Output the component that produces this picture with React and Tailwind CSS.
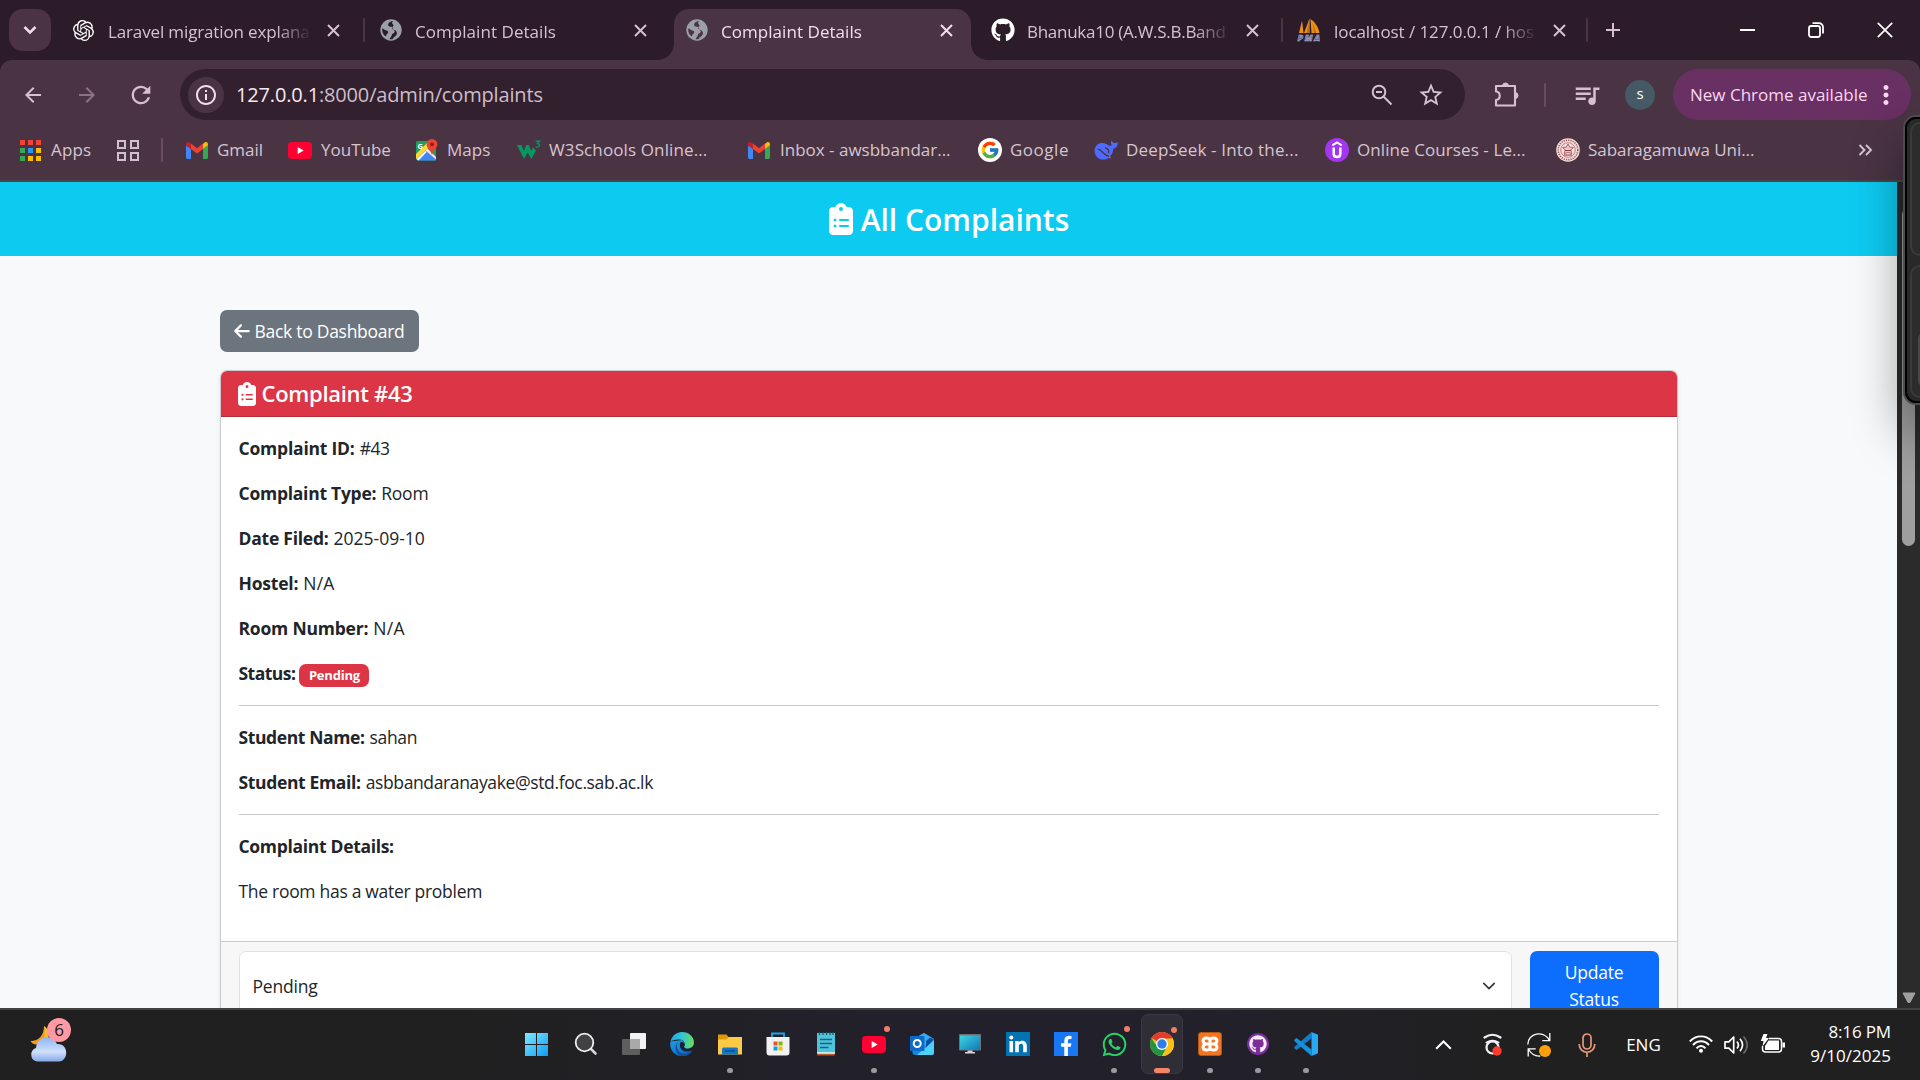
import React from 'react';
import { FaClipboardList, FaArrowLeft, FaGithub, FaWhatsapp } from 'react-icons/fa6';
import { SiOpenai, SiXampp } from 'react-icons/si';
import { FcGoogle } from 'react-icons/fc';
import {
  MdArrowBack,
  MdArrowForward,
  MdRefresh,
  MdStarBorder,
  MdQueueMusic,
  MdMoreVert,
  MdInfoOutline,
  MdAdd,
} from 'react-icons/md';

/* ---------- Favicons ---------- */

function Globe() {
  return (
    <svg viewBox="0 0 22 22" className="size-[22px]">
      <circle cx="11" cy="11" r="10.7" fill="#9aa0a6" />
      <path
        d="M11.5 2.2c-2.6 1-3.4 2.1-3.4 3.8 0 1.2 1.1 1.6 2.8 1.7 1.6.2 1.8 1 1.8 2 0 1.2 1.5 1.1 1.9 2.2.4 1.2-.5 2.2-1.7 2.7-1.3.6-.7 2.1-1.9 3.3-.8.8-1.3 1.4-1.3 2.3 1 .1 2.1.1 3-.2 1-2.3 3.4-2.6 4.1-5 .3-1 .1-2.3-.8-3.1-1.4-1.3-3.6-.7-4-2.3-.3-1.4 1.3-1.7 1.5-3 .1-1.2-1.4-1.5-1.4-2.6 0-.9.6-1.3 1.2-1.6zM2.3 9.6c1.7.2 2.3 1.6 4 1.8 1.5.2 2.1 1 1.900 2.200-.2 1.300-1.700 1.300-1.900 2.600-.1.800-.5 1.100-1 1.100C3 15.500 1.800 12.500 2.300 9.600z"
        fill="currentColor"
      />
    </svg>
  );
}

function PhpMyAdmin() {
  return (
    <svg viewBox="0 0 24 24" className="size-6">
      <path d="M5 2.500 2 15h4.500zM12.500.5 7 15h5.500zM13.500 1l1 14h8C21.500 9 18 4 13.500 1z" fill="#f29111" />
      <path d="M12.500.5 9.500 15h3zM15.500 4l1.500 11h2.500z" fill="#b9741a" />
      <text x="0.500" y="22.800" fontSize="9" fontWeight="800" fontStyle="italic" fontFamily="Open Sans, sans-serif" fill="#5a6694" stroke="#d5d8ea" strokeWidth=".35" textLength="22.500">
        PMA
      </text>
    </svg>
  );
}

function Gmail() {
  return (
    <svg viewBox="0 0 22 17" className="h-[17px] w-[22px]">
      <path d="M0 3v12.500C0 16.300.7 17 1.500 17H5V7z" fill="#4285f4" />
      <path d="M17 17h3.500c.8 0 1.500-.7 1.500-1.500V3l-5 4z" fill="#34a853" />
      <path d="M17 2v5l5-3.700V2.200C22 .4 20-.600 18.500.600z" fill="#fbbc04" />
      <path d="M5 7.100V1.600l6 4.600 6-4.600v5.500l-6 4.500z" fill="#ea4335" />
      <path d="M0 2.200v1.200L5 7.100V1.900L3.500.600C2-.600 0 .4 0 2.200z" fill="#c5221f" />
    </svg>
  );
}

function YouTube({ className }) {
  return (
    <svg viewBox="0 0 24 17" className={className}>
      <rect width="24" height="17" rx="3.800" fill="#ff0033" />
      <path d="M9.700 5v7l6-3.500z" fill="#fff" />
    </svg>
  );
}

function Maps() {
  return (
    <svg viewBox="0 0 22 22" className="size-[22px]">
      <rect x="0" y="2" width="20" height="19.500" rx="2" fill="#1fa05a" />
      <path d="M0 19.500 9.500 11l10.500 9v1.500H2z" fill="#4285f4" />
      <path d="m0 15 11-11 4 2L1 20.500 0 19z" fill="#fdd835" />
      <path d="M0 4a2 2 0 0 1 2-2h10.500L0 14.500z" fill="#1fa05a" />
      <path d="m9.500 11.500 2-2L20 18v2.500z" fill="#e8eaed" />
      <path d="M1 20.500 9.500 12l1.200 1.100-8.200 8.400z" fill="#fff" />
      <text x="1.500" y="9.500" fontSize="7.500" fontWeight="700" fontFamily="Open Sans, sans-serif" fill="#fff">G</text>
      <path d="M16 0a5.400 5.400 0 0 0-5.400 5.400c0 3.600 4.200 5.200 5.400 10.600 1.200-5.400 5.400-7 5.400-10.600A5.400 5.400 0 0 0 16 0z" fill="#e94335" />
      <circle cx="16" cy="5.300" r="1.900" fill="#8c1d18" />
    </svg>
  );
}

function W3() {
  return (
    <svg viewBox="0 0 24 20" className="h-5 w-6">
      <path d="M0 5h4.500l2.300 6 2.500-6h2.400l2.500 6L16 7.500l3 3L14.500 19 10.500 12.500 7 19z" fill="#059862" />
      <path d="M18.700 1.200h3.800l-2 2.300c3 .2 2.800 4.300-1.800 3.600" fill="none" stroke="#059862" strokeWidth="1.300" />
    </svg>
  );
}

function DeepSeek() {
  return (
    <svg viewBox="0 0 24 22" className="h-[22px] w-6">
      <path
        d="M23.700 3c-1.500 1-2.200 1-3.200.9-1.500-.2-2.300-1-3-2.400-.8 1.400-.8 3.300.3 5-2 .6-3.500-.2-5-1.300C11 4.200 9 3.800 7.500 3.900 3.500 4.200.6 7.500.6 12c0 4.900 3.900 8.600 8.600 8.600 2 0 3.700-.6 5.100-1.700 1 .5 2.100.6 3.200.2-.3-.7-.9-1-1.400-1.700 2.200-2.400 3-4.900 3.100-7.600 2.800-.7 4.800-2.800 4.500-6.800z"
        fill="#4d6bfe"
      />
      <path d="M3.500 10.200c4.500-.2 5.500 6 11.500 7.200M11.200 9c2.600.6 3.900 2.800 3.400 5.200" fill="none" stroke="#4a3444" strokeWidth="1.300" />
    </svg>
  );
}

function Udemy() {
  return (
    <svg viewBox="0 0 24 24" className="size-6">
      <circle cx="12" cy="12" r="12" fill="#a435f0" />
      <path d="m7.300 7.300 4.700-2.900 4.700 2.900" fill="none" stroke="#fff" strokeWidth="2.100" />
      <path d="M8.700 9.500v6.200c0 4.400 6.600 4.400 6.600 0V9.500" fill="none" stroke="#fff" strokeWidth="2.500" />
    </svg>
  );
}

function Crest() {
  return (
    <svg viewBox="0 0 24 24" className="size-6">
      <circle cx="12" cy="12" r="11.800" fill="#f3dedd" />
      <circle cx="12" cy="12" r="9.800" fill="none" stroke="#a55a5c" strokeWidth="1.500" strokeDasharray="1.300 1" />
      <circle cx="12" cy="12" r="7.300" fill="none" stroke="#b97475" strokeWidth=".9" />
      <path d="m12 6 1.700 3.200 3.600.3-2.500 2.500 1 3.700-3.800-1.500-3.800 1.500 1-3.700-2.500-2.500 3.600-.3z" fill="#e9cac8" stroke="#a04c50" strokeWidth=".8" />
      <path d="M9 12.500h6M8 17h8" stroke="#8d3a40" strokeWidth="1" />
    </svg>
  );
}

function AppsGrid() {
  const colors = ['bg-[#f44336]', 'bg-[#f44336]', 'bg-[#f44336]', 'bg-[#34a853]', 'bg-[#2196f3]', 'bg-[#fbbc04]', 'bg-[#34a853]', 'bg-[#fbbc04]', 'bg-[#fbbc04]'];
  return (
    <div className="grid grid-cols-3 gap-x-[3px] gap-y-[3px]">
      {colors.map((c, i) => (
        <span key={i} className={`h-[5px] w-[5px] ${c}`} />
      ))}
    </div>
  );
}

/* ---------- Browser chrome ---------- */

const tabs = [
  { title: 'Laravel migration explana', icon: <SiOpenai className="size-[21px] text-white" />, inset: 'ml-[11px] mr-[-1px]', track: 'tracking-[-0.008em]' },
  { title: 'Complaint Details', icon: <span className="text-[#2c1b29]"><Globe /></span>, inset: 'ml-3 mr-[-1px]', track: 'tracking-[0.003em]' },
  { title: 'Complaint Details', icon: <span className="text-[#4a3444]"><Globe /></span>, inset: 'ml-3 mr-[-1px]', track: 'tracking-[0.003em]', active: true },
  { title: 'Bhanuka10 (A.W.S.B.Band', icon: <FaGithub className="size-6 text-white" />, inset: 'ml-[11px] mr-0', track: 'tracking-[-0.016em]' },
  { title: 'localhost / 127.0.0.1 / hos', icon: <PhpMyAdmin />, inset: 'ml-[11px] mr-px', track: 'tracking-[-0.004em]' },
];

function Tab({ title, icon, active, inset, track, divider }) {
  return (
    <div className="relative h-[60px] w-[306px] shrink-0 pt-[9px]">
      {divider && <span className="absolute top-[18px] -left-[5px] h-6 w-[2px] rounded bg-[#4a3444]" />}
      {active && (
        <>
          <span className="absolute bottom-0 -left-4 size-4 bg-[radial-gradient(circle_at_0_0,transparent_15.500px,#4a3444_16px)]" />
          <span className="absolute right-[-7px] bottom-0 size-4 bg-[radial-gradient(circle_at_100%_0,transparent_15.500px,#4a3444_16px)]" />
        </>
      )}
      <div
        className={`flex h-[51px] w-[297px] items-center pb-[9px] ${
          active ? 'rounded-t-[15px] bg-[#4a3444] text-[#f1dfea]' : 'text-[#d9bfd2]'
        }`}
      >
        <span className={`flex w-9 shrink-0 items-center ${inset}`}>{icon}</span>
        <span className={`w-[204px] shrink-0 pt-[3px] whitespace-nowrap [mask-image:linear-gradient(90deg,#000_168px,transparent_204px)] ${track}`}>
          {title}
        </span>
        <svg viewBox="0 0 13 13" className="ml-[15px] size-[13px] shrink-0">
          <path d="m1 1 11 11M12 1 1 12" stroke="currentColor" strokeWidth="2" />
        </svg>
      </div>
    </div>
  );
}

function TabStrip() {
  return (
    <div className="flex h-[60px] bg-[#2c1b29] text-[17px]">
      <div className="mt-[9px] mr-[11px] ml-[9px] flex size-[42px] shrink-0 items-center justify-center rounded-[14px] bg-[#4a3444]">
        <svg viewBox="0 0 14 10" className="h-[10px] w-[14px]">
          <path d="m1.500 2 5.500 5.500L12.500 2" fill="none" stroke="#f1dfea" strokeWidth="2.500" />
        </svg>
      </div>
      {tabs.map((t, i) => (
        <Tab key={i} {...t} divider={i === 1 || i === 4} />
      ))}
      <div className="flex h-[60px] items-center">
        <span className="-ml-[6px] h-6 w-[2px] rounded bg-[#4a3444]" />
        <MdAdd className="ml-[13px] size-[24px] text-[#d9bfd2]" />
      </div>
      <div className="mr-[27px] ml-auto flex h-[60px] items-center gap-[53px] text-white">
        <span className="h-[2px] w-[15px] bg-white" />
        <svg viewBox="0 0 16 16" className="size-4" fill="none" stroke="#fff" strokeWidth="1.800">
          <rect x="1" y="4" width="11" height="11" rx="2.200" />
          <path d="M4.500 1.200H11A4 4 0 0 1 15 5.200v6.300" />
        </svg>
        <svg viewBox="0 0 16 16" className="size-4">
          <path d="m.8.8 14.400 14.400M15.200.8.8 15.200" stroke="#fff" strokeWidth="1.700" />
        </svg>
      </div>
    </div>
  );
}

function Toolbar() {
  return (
    <div className="bg-[#2c1b29]">
      <div className="flex h-[69px] items-center rounded-t-[12px] bg-[#4a3444] text-[#d9bfd2]">
        <MdArrowBack className="ml-[21px] size-6 shrink-0" />
        <MdArrowForward className="ml-[30px] size-6 shrink-0 text-[#8c7285]" />
        <MdRefresh className="ml-[28px] size-[28px] shrink-0" />
        <div className="ml-[25px] flex h-[51px] w-[1285px] shrink-0 items-center rounded-full bg-[#32202e] pl-[8px]">
          <span className="flex size-9 items-center justify-center rounded-full bg-[#4a3444]">
            <MdInfoOutline className="size-6 text-[#f1dfea]" />
          </span>
          <span className="ml-3 text-[20px] tracking-[-0.008em] text-[#cdbdc8]">
            <span className="text-[#f6e8f1]">127.0.0.1</span>:8000/admin/complaints
          </span>
          <svg viewBox="0 0 22 22" className="mt-[1px] ml-auto size-[22px]" fill="none" stroke="#d0c3cc" strokeWidth="2">
            <circle cx="8" cy="8" r="6.300" />
            <path d="m12.500 12.500 8 8M5 8h6" />
          </svg>
          <MdStarBorder className="mr-[20px] ml-[24px] size-[28px] text-[#d0c3cc]" />
        </div>
        <svg viewBox="0 0 26 26" className="ml-[29px] size-[26px] shrink-0" fill="none" stroke="currentColor" strokeWidth="2.100" strokeLinejoin="round">
          <path d="M2 4h19v19.500H2v-5.500c5-.5 5-8 0-8.500z" />
          <path d="M8.500 4a3 3 0 0 1 6 0zM21 10.500a3 3 0 0 1 0 6z" fill="currentColor" strokeWidth="1" />
        </svg>
        <span className="ml-[24px] h-6 w-[2px] shrink-0 rounded bg-[#6a4b62]" />
        <MdQueueMusic className="ml-[26px] size-[30px] shrink-0" />
        <span className="ml-[23px] flex size-[30px] shrink-0 items-center justify-center rounded-full bg-[#455a64] pb-[2px] text-[15px] leading-none text-white">
          s
        </span>
        <div className="ml-[18px] flex h-[51px] w-[238px] shrink-0 items-center rounded-full bg-[#693063] pl-[17px] text-[17px] text-[#fbd7f2]">
          <span className="whitespace-nowrap">New Chrome available</span>
          <MdMoreVert className="ml-[3px] size-[30px] shrink-0" />
        </div>
      </div>
    </div>
  );
}

function Bookmark({ className, icon, iconClass = 'w-8', label }) {
  return (
    <div className={`flex shrink-0 items-center whitespace-nowrap ${className}`}>
      <span className={`flex shrink-0 items-center ${iconClass}`}>{icon}</span>
      <span>{label}</span>
    </div>
  );
}

function BookmarksBar() {
  return (
    <div className="-mt-[9px] flex h-[62px] items-center border-b-2 border-[#4b454b] bg-[#4a3444] pl-[20px] text-[17px] text-[#d5c5d0]">
      <Bookmark className="w-[97px] tracking-[0.010em]" icon={<AppsGrid />} iconClass="w-[31px]" label="Apps" />
      <div className="grid w-[22px] shrink-0 grid-cols-2 gap-[3px]">
        {[0, 1, 2, 3].map((i) => (
          <span key={i} className="size-[9px] border-2 border-[#d0c0cb]" />
        ))}
      </div>
      <span className="mr-[23px] ml-[22px] h-6 w-[2px] shrink-0 rounded bg-[#6a4b62]" />
      <Bookmark className="w-[102px]" icon={<Gmail />} iconClass="w-[31px]" label="Gmail" />
      <Bookmark className="w-[128px]" icon={<YouTube className="h-[17px] w-6" />} iconClass="w-[33px]" label="YouTube" />
      <Bookmark className="w-[101px]" icon={<Maps />} iconClass="w-[31px]" label="Maps" />
      <Bookmark className="w-[231px] tracking-[0.007em]" icon={<W3 />} label="W3Schools Online..." />
      <Bookmark className="w-[230px]" icon={<Gmail />} label="Inbox - awsbbandar..." />
      <Bookmark
        className="w-[116px] tracking-[0.030em]"
        icon={<span className="flex size-6 items-center justify-center rounded-full bg-white"><FcGoogle className="size-5" /></span>}
        label="Google"
      />
      <Bookmark className="w-[231px] tracking-[0.010em]" icon={<DeepSeek />} label="DeepSeek - Into the..." />
      <Bookmark className="w-[231px] tracking-[0.005em]" icon={<Udemy />} label="Online Courses - Le..." />
      <Bookmark className="w-[200px] tracking-[-0.003em]" icon={<Crest />} label="Sabaragamuwa Uni..." />
      <svg viewBox="0 0 15 12" className="mr-[47px] ml-auto h-3 w-[15px]" fill="none" stroke="#d5c5d0" strokeWidth="1.900">
        <path d="m1.500 1 5 5-5 5M8 1l5 5-5 5" />
      </svg>
    </div>
  );
}

/* ---------- Page ---------- */

function Field({ label, children, track = 'tracking-[-0.012em]' }) {
  return (
    <p className="mb-[18px] h-[27px]">
      <strong className={`font-bold ${track}`}>{label}</strong>
      <span className="ml-[5px]">{children}</span>
    </p>
  );
}

function Page() {
  return (
    <div className="h-full min-w-0 flex-1 overflow-hidden bg-[#f8f9fa] text-[17.500px] leading-[27px] tracking-[-0.012em] text-[#212529]">
      <header className="flex h-[74px] items-center justify-center gap-2 bg-[#0dcaf0] pt-px pl-px text-white">
        <FaClipboardList className="-mt-[2px] h-[32px] w-6" />
        <h2 className="text-[30px] font-semibold tracking-normal">All Complaints</h2>
      </header>
      <main className="mx-auto w-[1458px] pt-[54px]">
        <button className="flex h-[42px] w-[199px] items-center rounded-[7px] bg-[#6c757d] pl-[13px] text-white">
          <FaArrowLeft className="mr-[4px] size-[18px]" />
          <span className="tracking-[-0.016em] whitespace-nowrap">Back to Dashboard</span>
        </button>
        <section className="mt-[18px] overflow-hidden rounded-[7px] border border-[#c9cbcd] bg-white shadow-[0_2px_5px_rgba(0,0,0,0.08)]">
          <div className="flex h-[46px] items-center border-b border-[#b52d3b] bg-[#dc3545] pl-[17px] text-white">
            <FaClipboardList className="mr-[6px] h-6 w-[18px]" />
            <h5 className="text-[22px] font-semibold tracking-[-0.013em]">Complaint #43</h5>
          </div>
          <div className="p-[18px]">
            <Field label="Complaint ID:"><span className="tracking-[-0.030em]">#43</span></Field>
            <Field label="Complaint Type:" track="tracking-[-0.015em]">Room</Field>
            <Field label="Date Filed:" track="tracking-[-0.014em]"><span className="tracking-normal">2025-09-10</span></Field>
            <Field label="Hostel:"><span className="tracking-[0.015em]">N/A</span></Field>
            <Field label="Room Number:"><span className="tracking-[0.020em]">N/A</span></Field>
            <p className="flex h-[27px] items-center">
              <strong className="font-bold tracking-[-0.030em]">Status:</strong>
              <span className="mt-[3px] ml-[4px] flex h-[23px] w-[70px] items-center justify-center rounded-[7px] bg-[#dc3545] text-[13px] font-bold text-white">
                Pending
              </span>
            </p>
            <hr className="my-[18px] border-[#c8c9ca]" />
            <Field label="Student Name:" track="tracking-[-0.022em]"><span className="tracking-[-0.020em]">sahan</span></Field>
            <p className="h-[27px]">
              <strong className="font-bold tracking-[-0.020em]">Student Email:</strong>
              <span className="ml-[5px] tracking-[-0.021em]">asbbandaranayake@std.foc.sab.ac.lk</span>
            </p>
            <hr className="my-[18px] border-[#c8c9ca]" />
            <Field label="Complaint Details:" track="tracking-[-0.018em]" />
            <p className="mb-[18px] h-[27px] tracking-[-0.017em]">The room has a water problem</p>
          </div>
          <div className="flex gap-[18px] border-t border-[#c9cbcd] bg-[#f7f7f7] px-[18px] py-[9px]">
            <div className="flex h-[70px] flex-1 items-center justify-between rounded-[7px] border border-[#dee2e6] bg-white pr-[15px] pl-[13px]">
              <span>Pending</span>
              <svg viewBox="0 0 16 16" className="size-[14px]">
                <path d="m2 5 6 6 6-6" fill="none" stroke="#343a40" strokeWidth="2" strokeLinecap="round" strokeLinejoin="round" />
              </svg>
            </div>
            <button className="h-[70px] w-[129px] rounded-[7px] bg-[#0d6efd] px-6 text-center text-white">
              Update Status
            </button>
          </div>
        </section>
      </main>
    </div>
  );
}

function Scrollbar() {
  return (
    <div className="flex h-full w-[23px] shrink-0 flex-col items-center bg-[#2b2b2b]">
      <svg viewBox="0 0 14 10" className="mt-[10px] h-[10px] w-[14px]"><path d="m7 1 6 8H1z" fill="#9f9f9f" /></svg>
      <div className="mt-[6px] h-[338px] w-[13px] rounded-full bg-[#9f9f9f]" />
      <svg viewBox="0 0 14 12" className="mt-auto mb-[4px] h-[12px] w-[14px]">
        <path d="M1 1h12L8 10.500H6z" fill="#9f9f9f" stroke="#9f9f9f" strokeWidth="1" strokeLinejoin="round" />
      </svg>
    </div>
  );
}

/* Floating panel docked past the right edge of the screen. */
function SidePanel() {
  return (
    <div className="absolute top-[115px] left-[1903px] h-[290px] w-[60px] rounded-[13px] border-2 border-[#4c4c4c] bg-[#292929] shadow-[0_28px_50px_rgba(0,0,0,0.400)]">
      <div className="flex h-full flex-col gap-[9px] rounded-[11px] border-2 border-black py-[3px] pl-[3px]">
        <div className="h-[134px] rounded-[10px] border-2 border-[#3a3a3a] bg-[#2c2c2c]" />
        <div className="flex flex-1 rounded-[10px] border-2 border-[#3a3a3a] bg-[#2c2c2c] pt-16 pb-2 pl-[6px]">
          <div className="w-full rounded-[8px] border-2 border-[#4a4845] bg-[#35332f]" />
        </div>
      </div>
    </div>
  );
}

/* ---------- Taskbar icons ---------- */

function WindowsLogo() {
  return (
    <svg viewBox="0 0 23 23" className="mr-[3px] size-[23px]">
      <defs>
        <linearGradient id="win" x1="0" y1="0" x2="1" y2="1">
          <stop offset="0" stopColor="#7fe9ff" />
          <stop offset="1" stopColor="#0f9bf5" />
        </linearGradient>
      </defs>
      <path d="M0 0h11v11H0zM12 0h11v11H12zM0 12h11v11H0zM12 12h11v11H12z" fill="url(#win)" />
    </svg>
  );
}

function SearchGlass() {
  return (
    <svg viewBox="0 0 24 24" className="size-6">
      <path d="m16 16 5.500 5.500" stroke="#d4d4d6" strokeWidth="2.600" strokeLinecap="round" />
      <circle cx="10.500" cy="10.500" r="8.800" fill="#414143" stroke="#eeeeef" strokeWidth="1.800" />
    </svg>
  );
}

function TaskView() {
  return (
    <svg viewBox="0 0 24 24" className="size-6">
      <rect x="8" y="1" width="16" height="16" rx="1" fill="#f2f2f2" />
      <rect x="0" y="7" width="18" height="16" rx="1" fill="#5e5e5e" />
      <path d="M8 7h10v10H8z" fill="#a9a9a9" />
    </svg>
  );
}

function Edge() {
  return (
    <svg viewBox="0 0 24 24" className="size-6">
      <defs>
        <linearGradient id="edgeA" x1="0" y1="0.300" x2="1" y2="0.400">
          <stop offset="0" stopColor="#22a6ea" />
          <stop offset=".5" stopColor="#35c6d0" />
          <stop offset="1" stopColor="#66dd58" />
        </linearGradient>
        <linearGradient id="edgeB" x1="0" y1="0" x2="0.600" y2="1">
          <stop offset="0" stopColor="#1b9de2" />
          <stop offset="1" stopColor="#0c6fd0" />
        </linearGradient>
      </defs>
      <path d="M.5 9.500C-1 17 4 24 12 24c4.500 0 8-2 10-5L12 8z" fill="url(#edgeB)" />
      <path d="M9 9.500c-2.500 2-3 6.500-.2 9.700 2.700 3.100 8.200 3.500 13.200.1-2 2.900-5.500 4.700-9.800 4.700C6 23.500 2.500 14 9 9.500z" fill="#154c9c" />
      <path d="M.5 9.500C2 3.500 6.500 0 12 0c7 0 12 5 12 10.500 0 3.800-3 6-6.200 6-2.800 0-4-1-3.500-2 1.500-2 .7-6.500-4.800-7C5.500 7.200 2 8.500.5 9.500z" fill="url(#edgeA)" />
      <path d="M10.200 10.500c1.800-1.300 4.300 0 4.600 2-.1 1.300-1.300 2-.5 3 1.500 1.600 5 1.700 8.700-.2l-.7 3.400c-5.300 2.400-14.300.5-12.100-8.200z" fill="#1e2028" />
      <path d="M22 18.900c-5 3-10.500 1.500-11.800-4 2 4.500 7.500 5 11.800 3.300z" fill="#154c9c" />
    </svg>
  );
}

function Folder() {
  return (
    <svg viewBox="0 0 24 24" className="size-6">
      <path d="M0 2.500h8.500l2 2.500H24v6H0z" fill="#dd9a06" />
      <path d="M0 7.500h8L11 5h13v17.500H0z" fill="#fdca45" />
      <path d="M4 22.500v-5c0-1.500 1-2 2-2h12c1.500 0 2 .8 2 2v5z" fill="#1276c9" />
      <path d="M7 19h10" stroke="#0b4b89" strokeWidth="1.300" />
    </svg>
  );
}

function Store() {
  return (
    <svg viewBox="0 0 24 24" className="size-6">
      <path d="M6 6V1.500h12V6" fill="none" stroke="#1fa3ec" strokeWidth="1.800" />
      <path d="M.5 5h23v15.500a3 3 0 0 1-3 3h-17a3 3 0 0 1-3-3z" fill="#f1f1f1" />
      <path d="M7.500 9.500h4v4h-4z" fill="#f25022" />
      <path d="M12.500 9.500h4v4h-4z" fill="#7fba00" />
      <path d="M7.500 14.500h4v4h-4z" fill="#00a4ef" />
      <path d="M12.500 14.500h4v4h-4z" fill="#ffb900" />
    </svg>
  );
}

function Notepad() {
  return (
    <svg viewBox="0 0 24 24" className="size-6">
      <rect x="3" y="1" width="18" height="22.500" rx="1" fill="#b65b26" />
      <rect x="3" y="1" width="18" height="20.800" rx="1" fill="#f2f2f2" />
      <rect x="3" y="1" width="18" height="19.300" rx="1" fill="#4fc3dc" />
      <path d="M6 7.500h12M6 11.500h12M6 15.500h8.500" stroke="#14647c" strokeWidth="1.400" />
      <path d="M5.500 0v3M9 0v3M12.500 0v3M16 0v3M19 0v3" stroke="#126074" strokeWidth="1.300" />
    </svg>
  );
}

function Outlook() {
  return (
    <svg viewBox="0 0 24 24" className="size-6">
      <path d="m14 1 10 6v13.500a2.500 2.500 0 0 1-2.500 2.500H5c-1.500 0-2.500-1-2.500-2.500V8z" fill="#1389dc" />
      <path d="m14 1 10 6-10 8-9-9z" fill="#34aef0" />
      <path d="M24 8v12.500a2.500 2.500 0 0 1-2.500 2.500H7z" fill="#4bd1fa" />
      <path d="m24 7.500-8 8V9l4-3.500z" fill="#0b50a8" />
      <rect x="0" y="4" width="14.500" height="15" rx="1" fill="#0b6cce" />
      <circle cx="7.200" cy="11.500" r="3.500" fill="none" stroke="#fff" strokeWidth="2" />
    </svg>
  );
}

function Monitor() {
  return (
    <svg viewBox="0 0 24 24" className="size-6">
      <defs>
        <linearGradient id="mon" x1="0" y1="0" x2="1" y2="1">
          <stop offset="0" stopColor="#3fd6e0" />
          <stop offset="1" stopColor="#0d78b8" />
        </linearGradient>
      </defs>
      <rect x="1" y="2" width="22" height="16.500" rx=".8" fill="#6c7177" />
      <rect x="2" y="3.500" width="20" height="14" fill="url(#mon)" />
      <path d="M9.500 18.500h5V20H17v1.500H7V20h2.500z" fill="#d5d7d9" />
    </svg>
  );
}

function LinkedIn() {
  return (
    <svg viewBox="0 0 24 24" className="size-6">
      <path d="M0 0h24v24H0z" fill="#0274b3" />
      <circle cx="5.300" cy="5.500" r="2" fill="#fff" />
      <path d="M3.500 9h3.600v11.300H3.500zM9.200 9h3.400v1.600c1.700-3 8.200-2.700 8.200 3v6.700h-3.600v-6c0-3.400-4.400-3.100-4.400 0v6H9.200z" fill="#fff" />
    </svg>
  );
}

function Facebook() {
  return (
    <svg viewBox="0 0 24 24" className="size-6">
      <path d="M0 0h24v24H0z" fill="#1877f2" />
      <path d="M10.300 24v-9.300H7v-3.500h3.300V8.700c0-3.300 2-4.900 4.800-4.900l2.400.2v2.900h-1.600c-1.500 0-2 .9-2 2v2.300h3.500l-.6 3.500h-2.900V24z" fill="#fff" />
    </svg>
  );
}

function Chrome() {
  return (
    <svg viewBox="0 0 24 24" className="size-6">
      <circle cx="12" cy="12" r="12" fill="#fbc116" />
      <path d="M12 12 1.600 6A12 12 0 0 1 22.400 6z" fill="#e33b2e" />
      <path d="M1.600 6A12 12 0 0 0 12 24l5.200-9L12 12H5.100z" fill="#229342" />
      <path d="M12 6.500h10.700A12 12 0 0 1 12 24l5-9z" fill="#fbc116" />
      <circle cx="12" cy="12" r="6" fill="#fff" />
      <circle cx="12" cy="12" r="4.700" fill="#2f7de9" />
    </svg>
  );
}

function Xampp() {
  return (
    <span className="flex size-6 items-center justify-center rounded-[3px] border border-[#b8560f] bg-[#f37623]">
      <svg viewBox="0 0 24 24" className="size-[22px]" fill="none" stroke="#fff" strokeWidth="3.400" strokeLinejoin="round" strokeLinecap="round">
        <path d="M12 9.500V8c0-3.500-7.500-3.500-7.500.5 0 2 1.500 3.500 3.500 3.500-2 0-3.500 1.500-3.500 3.500 0 4 7.500 4 7.500.5v-1.500M12 9.500V8c0-3.500 7.500-3.500 7.500.5 0 2-1.500 3.500-3.500 3.500 2 0 3.500 1.500 3.500 3.500 0 4-7.500 4-7.500.5v-1.500M8 12h8" />
      </svg>
    </span>
  );
}

function GithubDesktop() {
  return (
    <span className="flex size-[22px] items-center justify-center rounded-full bg-[#7b2d9c]">
      <FaGithub className="size-[18px] text-[#f4eaf8]" />
    </span>
  );
}

function VsCode() {
  return (
    <svg viewBox="0 0 24 24" className="size-6">
      <path d="M17.500 6.500 2.500 18 .3 16.300v-1.200L17.500 0z" fill="#0f7fc7" />
      <path d="M17.500 17.500 2.500 6 .3 7.700v1.200L17.500 24z" fill="#1591dc" />
      <path d="M17.500 0 24 2.800v18.400L17.500 24z" fill="#2aa9f3" />
    </svg>
  );
}

function Weather() {
  return (
    <div className="relative mt-[16px] ml-[30px] h-[38px] w-[42px]">
      <svg viewBox="0 0 42 38" className="h-[38px] w-[42px]">
        <defs>
          <linearGradient id="cloud" x1="0" y1="0" x2="0" y2="1">
            <stop offset="0" stopColor="#8fb5f2" />
            <stop offset=".6" stopColor="#cfe0fa" />
            <stop offset="1" stopColor="#86a8ea" />
          </linearGradient>
        </defs>
        <path d="M14 0c4 6 4 14-6 18-2 .8-5 .8-7.500-3C9 15 14 9 14 0z" fill="#f49a22" />
        <path d="M14 0c5 3 6 10 3 15L8 19c6-4 8-10 6-19z" fill="#f7b733" />
        <path d="M7 35.500a7 7 0 0 1-1-13.500c1-13 17-14 21-4 12-1 12 17 2 17.500z" fill="url(#cloud)" />
      </svg>
      <span className="absolute -top-[8px] left-[17px] flex size-6 items-center justify-center rounded-full bg-[#ff99a4] text-[17px] text-[#1a1a1a]">
        6
      </span>
    </div>
  );
}

const apps = [
  { icon: <WindowsLogo /> },
  { icon: <SearchGlass /> },
  { icon: <TaskView /> },
  { icon: <Edge /> },
  { icon: <Folder />, running: true },
  { icon: <Store /> },
  { icon: <Notepad /> },
  { icon: <YouTube className="h-[17px] w-6" />, running: true, alert: true },
  { icon: <Outlook /> },
  { icon: <Monitor /> },
  { icon: <LinkedIn /> },
  { icon: <Facebook /> },
  { icon: <FaWhatsapp className="size-[27px] text-[#25d366]" />, running: true, alert: true },
  { icon: <Chrome />, focused: true, alert: true },
  { icon: <Xampp />, running: true },
  { icon: <GithubDesktop />, running: true },
  { icon: <VsCode />, running: true },
];

function TaskbarApp({ icon, running, alert, focused }) {
  return (
    <div className="flex h-[70px] w-12 shrink-0 justify-center pt-1">
      <div
        className={`relative flex h-[60px] w-[42px] items-center justify-center rounded-[7px] ${
          focused ? 'border border-[#3b3a42] bg-[#2f2e37]' : ''
        }`}
      >
        {icon}
        {alert && <span className="absolute top-[12px] right-[5px] size-[6px] rounded-full bg-[#f27c66]" />}
        {running && <span className="absolute bottom-px left-[18px] h-[5px] w-[6px] rounded-full bg-[#9a9a9c]" />}
        {focused && <span className="absolute bottom-0 left-[12px] h-[5px] w-4 rounded-full bg-[#f88468]" />}
      </div>
    </div>
  );
}

function Tray() {
  return (
    <div className="mr-[29px] ml-auto flex h-[70px] items-center text-[17px] text-white">
      <svg viewBox="0 0 17 10" className="mr-[31px] h-[10px] w-[17px]">
        <path d="m1.200 8.800 7.300-7.300 7.300 7.300" fill="none" stroke="#fff" strokeWidth="2" />
      </svg>
      <svg viewBox="0 0 20 24" className="mr-[24px] h-6 w-5">
        <path d="M1.500 4.500Q9.500-1 17.500 4.500" fill="none" stroke="#f1f3fb" strokeWidth="2.200" strokeLinecap="round" />
        <path d="M3.500 9.500Q9.500 6 15.500 9.500" fill="none" stroke="#f1f3fb" strokeWidth="2" strokeLinecap="round" />
        <circle cx="9.500" cy="14.500" r="6" fill="none" stroke="#f1f3fb" strokeWidth="2.200" />
        <circle cx="14" cy="18" r="4.700" fill="#ff3b30" />
      </svg>
      <svg viewBox="0 0 24 26" className="mr-[27px] h-[26px] w-6" fill="none" stroke="#fff" strokeWidth="1.300">
        <path d="M.8 12.500C.8 1 16.500-2.500 22.500 8.500M22.800 1v7.700h-7.500M1.200 24.500v-7.700h7.500M1.200 17c3 5 7 7.500 12 7" />
        <circle cx="18" cy="19" r="6" fill="#ff9f0a" stroke="none" />
      </svg>
      <svg viewBox="0 0 18 24" className="mr-[30px] h-6 w-[18px]" fill="none" stroke="#e8977a" strokeWidth="1.700">
        <rect x="5" y="1" width="8" height="15" rx="4" />
        <path d="M1.200 11c0 11 15.600 11 15.600 0M9 19.500V24" />
      </svg>
      <span className="w-[63px]">ENG</span>
      <svg viewBox="0 0 24 18" className="-mt-[2px] h-[18px] w-6" fill="none" stroke="#fff" strokeWidth="1.900">
        <path d="M.8 6.500C7-.3 17-.3 23.200 6.500M4 10c4.500-5 11.500-5 16 0M7.500 13.300c2.500-3 6.500-3 9 0" />
        <circle cx="12" cy="15.800" r="2" fill="#fff" stroke="none" />
      </svg>
      <svg viewBox="0 0 25 20" className="ml-[11px] h-5 w-[25px]" fill="none" stroke="#fff" strokeWidth="1.700">
        <path d="M1 6.800h3.800L9.700 2v16l-4.900-4.800H1zM13 6.500c1.800 2.200 1.800 4.800 0 7M16 3.800c3.300 4 3.300 8.400 0 12.400" strokeLinejoin="round" />
        <path d="M19.500 1.500c4.800 5.500 4.800 11.500 0 17" stroke="#666" />
      </svg>
      <svg viewBox="0 0 25 20" className="-mt-[3px] ml-[11px] h-5 w-[25px]">
        <path d="M9 4.500h9.500a3 3 0 0 1 3 3V15a3 3 0 0 1-3 3h-13a3 3 0 0 1-3-3v-3" fill="none" stroke="#fff" strokeWidth="1.500" />
        <path d="M22.500 8.500H25v5h-2.500zM8.500 6.500H19V16H5v-4z" fill="#fff" />
        <path d="M3.500 0h4L6 4h3L2.500 12.500 3.500 7H.8z" fill="#fff" />
      </svg>
      <div className="-mt-[2px] ml-[25px] text-right leading-6 whitespace-nowrap">
        <div className="tracking-[-0.008em]">8:16 PM</div>
        <div className="tracking-[0.002em]">9/10/2025</div>
      </div>
    </div>
  );
}

function Taskbar() {
  return (
    <div className="grid h-[72px] grid-cols-[514px_816px_1fr] border-t-2 border-[#434343] bg-[linear-gradient(90deg,#202020_0%,#202020_22%,#22202a_45%,#22202a_62%,#202020_80%,#202020_100%)]">
      <Weather />
      <div className="flex">
        {apps.map((a, i) => (
          <TaskbarApp key={i} {...a} />
        ))}
      </div>
      <Tray />
    </div>
  );
}

export default function App() {
  return (
    <div className="relative flex h-[1080px] w-[1920px] flex-col overflow-hidden font-['Open_Sans','Noto_Sans',sans-serif]">
      <TabStrip />
      <Toolbar />
      <BookmarksBar />
      <div className="flex h-[826px] overflow-hidden">
        <Page />
        <Scrollbar />
      </div>
      <Taskbar />
      <SidePanel />
    </div>
  );
}
